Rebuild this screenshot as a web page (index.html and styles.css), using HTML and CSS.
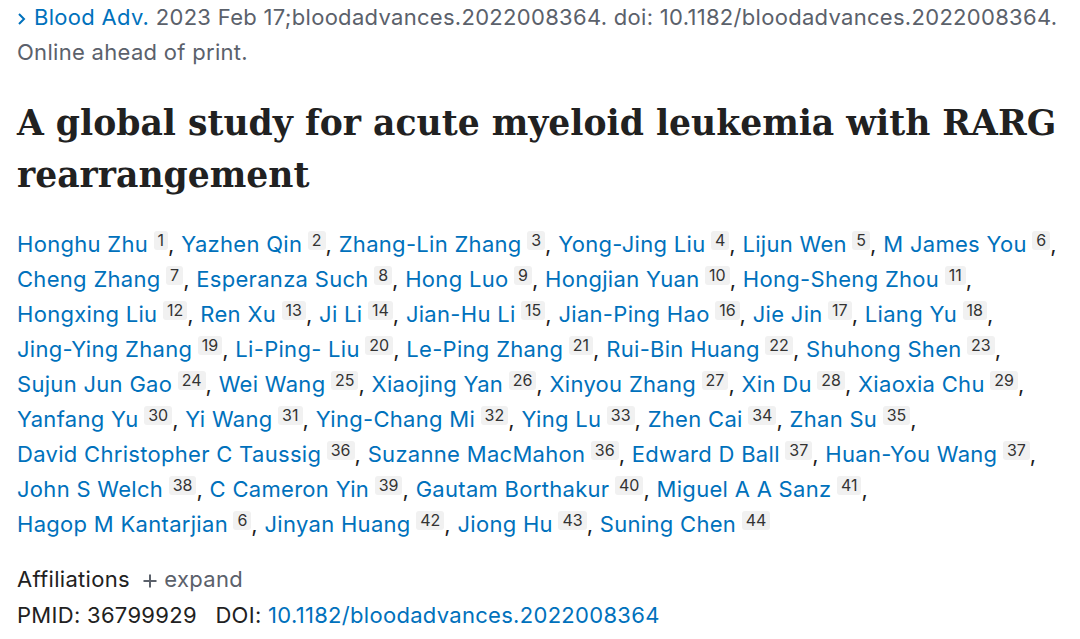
FILE: index.html
```html
<!DOCTYPE html>
<html>
<head>
<meta charset="utf-8">
<link rel="stylesheet" href="styles.css">
</head>
<body>
<div class="page">
  <div class="cite">
    <div class="cite-line"><a class="journal"><svg class="chev" width="10" height="14" viewBox="0 0 10 14"><path d="M2 2 L7 7 L2 12" fill="none" stroke="#0071bc" stroke-width="2"/></svg>Blood Adv.</a> 2023 Feb 17;bloodadvances.2022008364. doi: 10.1182/bloodadvances.2022008364.</div>
    <div class="cite-line">Online ahead of print.</div>
  </div>
  <h1 class="title">A global study for acute myeloid leukemia with RARG<br>rearrangement</h1>
  <div class="authors">
    <div class="line"><a class="au">Honghu Zhu</a> <sup class="aff">1</sup>, <a class="au">Yazhen Qin</a> <sup class="aff">2</sup>, <a class="au">Zhang-Lin Zhang</a> <sup class="aff">3</sup>, <a class="au">Yong-Jing Liu</a> <sup class="aff">4</sup>, <a class="au">Lijun Wen</a> <sup class="aff">5</sup>, <a class="au">M James You</a> <sup class="aff">6</sup>,</div>
    <div class="line"><a class="au">Cheng Zhang</a> <sup class="aff">7</sup>, <a class="au">Esperanza Such</a> <sup class="aff">8</sup>, <a class="au">Hong Luo</a> <sup class="aff">9</sup>, <a class="au">Hongjian Yuan</a> <sup class="aff">10</sup>, <a class="au">Hong-Sheng Zhou</a> <sup class="aff">11</sup>,</div>
    <div class="line"><a class="au">Hongxing Liu</a> <sup class="aff">12</sup>, <a class="au">Ren Xu</a> <sup class="aff">13</sup>, <a class="au">Ji Li</a> <sup class="aff">14</sup>, <a class="au">Jian-Hu Li</a> <sup class="aff">15</sup>, <a class="au">Jian-Ping Hao</a> <sup class="aff">16</sup>, <a class="au">Jie Jin</a> <sup class="aff">17</sup>, <a class="au">Liang Yu</a> <sup class="aff">18</sup>,</div>
    <div class="line"><a class="au">Jing-Ying Zhang</a> <sup class="aff">19</sup>, <a class="au">Li-Ping- Liu</a> <sup class="aff">20</sup>, <a class="au">Le-Ping Zhang</a> <sup class="aff">21</sup>, <a class="au">Rui-Bin Huang</a> <sup class="aff">22</sup>, <a class="au">Shuhong Shen</a> <sup class="aff">23</sup>,</div>
    <div class="line"><a class="au">Sujun Jun Gao</a> <sup class="aff">24</sup>, <a class="au">Wei Wang</a> <sup class="aff">25</sup>, <a class="au">Xiaojing Yan</a> <sup class="aff">26</sup>, <a class="au">Xinyou Zhang</a> <sup class="aff">27</sup>, <a class="au">Xin Du</a> <sup class="aff">28</sup>, <a class="au">Xiaoxia Chu</a> <sup class="aff">29</sup>,</div>
    <div class="line"><a class="au">Yanfang Yu</a> <sup class="aff">30</sup>, <a class="au">Yi Wang</a> <sup class="aff">31</sup>, <a class="au">Ying-Chang Mi</a> <sup class="aff">32</sup>, <a class="au">Ying Lu</a> <sup class="aff">33</sup>, <a class="au">Zhen Cai</a> <sup class="aff">34</sup>, <a class="au">Zhan Su</a> <sup class="aff">35</sup>,</div>
    <div class="line"><a class="au">David Christopher C Taussig</a> <sup class="aff">36</sup>, <a class="au">Suzanne MacMahon</a> <sup class="aff">36</sup>, <a class="au">Edward D Ball</a> <sup class="aff">37</sup>, <a class="au">Huan-You Wang</a> <sup class="aff">37</sup>,</div>
    <div class="line"><a class="au">John S Welch</a> <sup class="aff">38</sup>, <a class="au">C Cameron Yin</a> <sup class="aff">39</sup>, <a class="au">Gautam Borthakur</a> <sup class="aff">40</sup>, <a class="au">Miguel A A Sanz</a> <sup class="aff">41</sup>,</div>
    <div class="line"><a class="au">Hagop M Kantarjian</a> <sup class="aff">6</sup>, <a class="au">Jinyan Huang</a> <sup class="aff">42</sup>, <a class="au">Jiong Hu</a> <sup class="aff">43</sup>, <a class="au">Suning Chen</a> <sup class="aff">44</sup></div>
  </div>
  <div class="affil">Affiliations <span class="expand"><svg class="plus" width="16" height="16" viewBox="0 0 16 16"><path d="M8 1.5 V14.5 M1.5 8 H14.5" stroke="#5b616b" stroke-width="2" fill="none"/></svg>expand</span></div>
  <div class="ids">PMID: 36799929 <span class="doi-label">DOI:</span> <a class="doi">10.1182/bloodadvances.2022008364</a></div>
</div>
</body>
</html>
```

FILE: styles.css
```css
html, body {
  margin: 0;
  padding: 0;
  background: #ffffff;
}
.page {
  padding: 0 17px;
  font-family: Inter, "Liberation Sans", sans-serif;
  font-size: 22px;
  letter-spacing: 0.3px;
  color: #212121;
}
.cite {
  color: #5b616b;
  line-height: 35px;
  margin-top: 0;
}
.cite-line {
  white-space: nowrap;
}
.journal {
  color: #0071bc;
}
.chev {
  margin-right: 7px;
  vertical-align: -1px;
}
.title {
  font-family: "DejaVu Serif", serif;
  font-weight: bold;
  font-size: 34.6px;
  letter-spacing: 0;
  line-height: 52px;
  color: #212121;
  margin: 27px 0 0 0;
  white-space: nowrap;
}
.authors {
  margin-top: 26px;
  line-height: 35px;
  color: #212121;
}
.line {
  white-space: nowrap;
}
.au {
  color: #0071bc;
}
.aff {
  display: inline-block;
  font-size: 16px;
  letter-spacing: 0;
  line-height: 19px;
  padding: 0 4px;
  background: #f1f1f1;
  border-radius: 3px;
  color: #333333;
  vertical-align: 6px;
  margin-left: -1px;
}
.affil {
  margin-top: 19px;
  line-height: 36px;
  color: #212121;
}
.expand {
  color: #5b616b;
  margin-left: 6px;
}
.plus {
  vertical-align: -2px;
  margin-right: 6px;
}
.ids {
  line-height: 36px;
  color: #212121;
}
.doi-label {
  margin-left: 12px;
}
.doi {
  color: #0071bc;
}
```
